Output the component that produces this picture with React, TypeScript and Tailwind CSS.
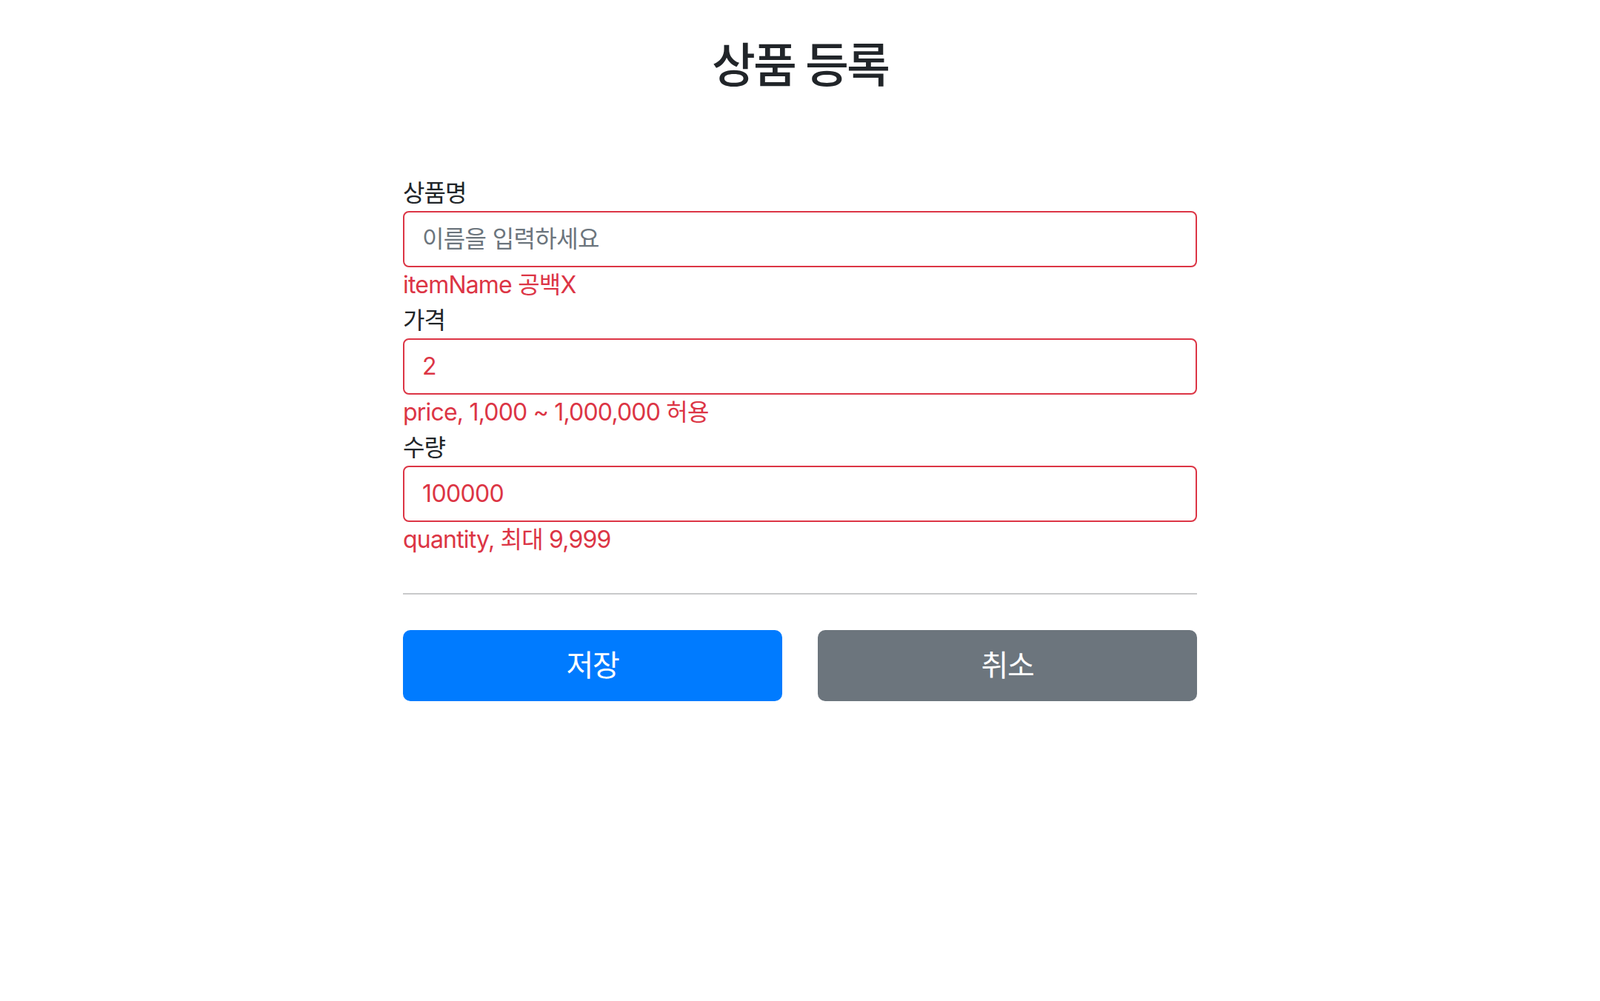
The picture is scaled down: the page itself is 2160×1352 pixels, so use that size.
import React from "react";

const font = "font-['Inter','Noto_Sans_CJK_KR',sans-serif]";

function Field({
  label,
  value,
  placeholder,
  error,
}: {
  label: string;
  value?: string;
  placeholder?: string;
  error: string;
}) {
  return (
    <div>
      <label className="block text-[32px] leading-[48px] tracking-[-0.03em] text-[#212529]">{label}</label>
      <input
        className="block h-[76px] w-full rounded-lg border-2 border-[#dc3545] bg-white px-6 text-[32px] tracking-[-0.02em] text-[#dc3545] placeholder:text-[#6c757d] focus:outline-none"
        defaultValue={value}
        placeholder={placeholder}
      />
      <div className="text-[32px] leading-[48px] tracking-[-0.025em] text-[#dc3545]">{error}</div>
    </div>
  );
}

export default function App() {
  return (
    <div className={`min-h-screen bg-white ${font}`}>
      <div className="mx-auto w-[1120px] px-6">
        <div className="pt-[50px] pb-[110px] text-center">
          <h2 className="text-[64px] font-medium leading-[1.2] tracking-[-0.045em] text-[#212529]">상품 등록</h2>
        </div>

        <form>
          <Field label="상품명" placeholder="이름을 입력하세요" error="itemName 공백X" />
          <Field label="가격" value="2" error="price, 1,000 ~ 1,000,000 허용" />
          <Field label="수량" value="100000" error="quantity, 최대 9,999" />

          <hr className="my-12 border-t-2 border-[#c8c9ca]" />

          <div className="grid grid-cols-2 gap-12">
            <button
              type="button"
              className="h-[96px] rounded-[10px] bg-[#007bff] text-[40px] tracking-[-0.03em] text-white"
            >
              저장
            </button>
            <button
              type="button"
              className="h-[96px] rounded-[10px] bg-[#6c757d] text-[40px] tracking-[-0.03em] text-white"
            >
              취소
            </button>
          </div>
        </form>
      </div>
    </div>
  );
}
